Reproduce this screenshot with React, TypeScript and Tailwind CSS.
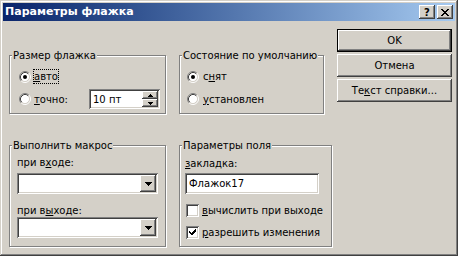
import React from "react";

const raised =
  "bg-[#d4d0c8] shadow-[inset_-1px_-1px_#404040,inset_1px_1px_#ffffff,inset_-2px_-2px_#808080,inset_2px_2px_#d4d0c8]";
const sunken =
  "bg-white shadow-[inset_1px_1px_#808080,inset_-1px_-1px_#ffffff,inset_2px_2px_#404040,inset_-2px_-2px_#d4d0c8]";

function Group({
  title,
  className,
  children,
}: {
  title: string;
  className: string;
  children: React.ReactNode;
}) {
  return (
    <div
      className={`relative border border-[#808080] shadow-[1px_1px_0_#ffffff,inset_1px_1px_0_#ffffff] ${className}`}
    >
      <span className="absolute left-[2px] -top-[7px] bg-[#d4d0c8] px-[1px] leading-[13px] whitespace-nowrap">
        {title}
      </span>
      {children}
    </div>
  );
}

function Radio({
  checked,
  focus,
  children,
}: {
  checked?: boolean;
  focus?: boolean;
  children: React.ReactNode;
}) {
  return (
    <div className="flex items-center">
      <svg width="12" height="12" viewBox="0 0 12 12" className="shrink-0">
        <circle cx="6" cy="6" r="4.5" fill="#fff" />
        <path d="M2.11 9.89A5.5 5.5 0 0 1 9.89 2.11" fill="none" stroke="#808080" />
        <path d="M9.89 2.11A5.5 5.5 0 0 1 2.11 9.89" fill="none" stroke="#ffffff" />
        <path d="M2.82 9.18A4.5 4.5 0 0 1 9.18 2.82" fill="none" stroke="#404040" />
        <path d="M9.18 2.82A4.5 4.5 0 0 1 2.82 9.18" fill="none" stroke="#d4d0c8" />
        {checked && <circle cx="6" cy="6" r="2" fill="#000" />}
      </svg>
      <span
        className={`ml-[2px] border leading-[13px] whitespace-nowrap ${
          focus ? "border-dotted border-black" : "border-transparent"
        }`}
      >
        {children}
      </span>
    </div>
  );
}

function Check({ checked, children }: { checked?: boolean; children: React.ReactNode }) {
  return (
    <div className="flex items-center h-[13px]">
      <div className={`relative w-[13px] h-[13px] shrink-0 ${sunken}`}>
        {checked && (
          <svg width="13" height="13" className="absolute left-0 top-0" shapeRendering="crispEdges">
            <path d="M3 5h1v1h1v1h1V6h1V5h1V4h1V3h1v3h-1v1h-1v1h-1v1h-1v1H6v-1H5V8H4V7H3z" fill="#000" />
          </svg>
        )}
      </div>
      <span className="ml-[3px] leading-[13px] whitespace-nowrap">{children}</span>
    </div>
  );
}

function Combo() {
  return (
    <div className={`w-[141px] h-[21px] flex justify-end p-[2px] ${sunken}`}>
      <div className={`w-[16px] h-[17px] flex items-center justify-center ${raised}`}>
        <svg width="7" height="4" shapeRendering="crispEdges">
          <path d="M0 0h7v1H6v1H5v1H4v1H3V3H2V2H1V1H0z" fill="#000" />
        </svg>
      </div>
    </div>
  );
}

function Button({ children, def }: { children: React.ReactNode; def?: boolean }) {
  if (def) {
    return (
      <div className="h-[23px] border border-black">
        <div className={`h-full flex items-center justify-center ${raised}`}>{children}</div>
      </div>
    );
  }
  return <div className={`h-[23px] flex items-center justify-center ${raised}`}>{children}</div>;
}

export default function App() {
  return (
    <div className="w-[458px] h-[256px] p-[3px] flex flex-col bg-[#d4d0c8] text-black text-[10px] font-['DejaVu_Sans',sans-serif] shadow-[inset_-1px_-1px_#404040,inset_1px_1px_#d4d0c8,inset_-2px_-2px_#808080,inset_2px_2px_#ffffff]">
      <div className="h-[18px] shrink-0 flex items-center pl-[2px] pr-[2px] bg-linear-to-r from-[#0a246a] to-[#a6caf0]">
        <span className="text-white font-bold text-[11px] flex-1">Параметры флажка</span>
        <div className={`w-[16px] h-[14px] flex items-center justify-center font-bold text-[10px] ${raised}`}>
          ?
        </div>
        <div className={`ml-[2px] w-[16px] h-[14px] flex items-center justify-center ${raised}`}>
          <svg width="8" height="7" shapeRendering="crispEdges">
            <path d="M0 0h2v1h1v1h2V1h1V0h2v1H7v1H6v1H5v1h1v1h1v1h1v1H6V6H5V5H3v1H2v1H0V6h1V5h1V4h1V3H2V2H1V1H0z" fill="#000" />
          </svg>
        </div>
      </div>

      <div className="flex flex-1">
        <div className="w-[334px] shrink-0 pl-[6px] pt-[34px]">
          <div className="flex gap-[13px]">
            <Group title="Размер флажка" className="w-[157px] h-[59px] pl-[9px] pr-[5px] pt-[13px]">
              <Radio checked focus>
                <u>а</u>вто
              </Radio>
              <div className="mt-[5px] h-[20px] flex items-center">
                <Radio>
                  <u>т</u>очно:
                </Radio>
                <div className={`ml-auto w-[71px] h-[20px] flex items-center pl-[4px] pr-[2px] ${sunken}`}>
                  <span className="flex-1 leading-[13px]">10 пт</span>
                  <div className="flex flex-col w-[16px]">
                    <div className={`h-[8px] flex items-center justify-center ${raised}`}>
                      <svg width="5" height="3" shapeRendering="crispEdges">
                        <path d="M2 0h1v1h1v1h1v1H0V2h1V1h1z" fill="#000" />
                      </svg>
                    </div>
                    <div className={`h-[8px] flex items-center justify-center ${raised}`}>
                      <svg width="5" height="3" shapeRendering="crispEdges">
                        <path d="M0 0h5v1H4v1H3v1H2V2H1V1H0z" fill="#000" />
                      </svg>
                    </div>
                  </div>
                </div>
              </div>
            </Group>
            <Group title="Состояние по умолчанию" className="w-[145px] h-[59px] pl-[7px] pt-[13px]">
              <div className="[&_span]:ml-[3px]">
                <Radio checked>
                  с<u>н</u>ят
                </Radio>
                <div className="mt-[5px] h-[20px] flex items-center">
                  <Radio>
                    <u>у</u>становлен
                  </Radio>
                </div>
              </div>
            </Group>
          </div>

          <div className="flex gap-[13px] mt-[31px]">
            <Group title="Выполнить макрос" className="w-[157px] h-[102px] pl-[7px] pt-[10px]">
              <div className="leading-[13px]">
                при в<u>х</u>оде:
              </div>
              <div className="mt-[4px]">
                <Combo />
              </div>
              <div className="mt-[10px] leading-[13px]">
                при в<u>ы</u>ходе:
              </div>
              <Combo />
            </Group>
            <Group title="Параметры поля" className="w-[153px] h-[102px] pl-[5px] pt-[11px]">
              <div className="leading-[13px]">
                <u>з</u>акладка:
              </div>
              <div className={`mt-[3px] w-[134px] h-[21px] flex items-center pl-[4px] ${sunken}`}>
                <span className="leading-[13px]">Флажок17</span>
              </div>
              <div className="mt-[10px] pl-[1px]">
                <Check>
                  <u>в</u>ычислить при выходе
                </Check>
              </div>
              <div className="mt-[9px] pl-[1px]">
                <Check checked>
                  <u>р</u>азрешить изменения
                </Check>
              </div>
            </Group>
          </div>
        </div>

        <div className="w-[115px] shrink-0 pt-[8px] flex flex-col gap-[2px]">
          <Button def>OK</Button>
          <Button>Отмена</Button>
          <Button>
            <span>
              Те<u>к</u>ст справки...
            </span>
          </Button>
        </div>
      </div>
    </div>
  );
}
